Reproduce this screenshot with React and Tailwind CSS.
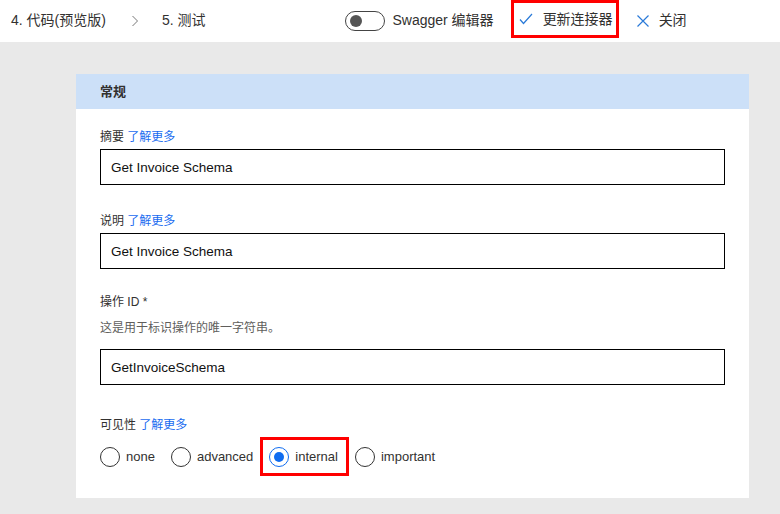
import React from 'react';

const font = { fontFamily: '"Liberation Sans", "Noto Sans CJK SC", sans-serif' };

function Radio({ label, checked }) {
  return (
    <div className="flex items-center">
      <span
        className={
          'flex h-[20px] w-[20px] items-center justify-center rounded-full border ' +
          (checked ? 'border-[#0f6cf0]' : 'border-[#333333]')
        }
      >
        {checked && <span className="h-[10px] w-[10px] rounded-full bg-[#0f6cf0]" />}
      </span>
      <span className="ml-[6px] text-[13px] text-[#323130]">{label}</span>
    </div>
  );
}

function Field({ label, link, value }) {
  return (
    <div>
      <div className="h-[20px] pt-[2px] text-[12px] leading-[18px] text-[#323130]">
        {label} {link && <span className="text-[#1a6cf0]">了解更多</span>}
      </div>
      <div className="mt-[3px] flex h-[36px] items-center border border-black px-[10px] pt-[2px] text-[13.5px] text-[#111]">
        {value}
      </div>
    </div>
  );
}

export default function App() {
  return (
    <div className="flex h-[514px] w-[780px] flex-col bg-[#e9e9e9]" style={font}>
      {/* top bar */}
      <div className="flex h-[42px] shrink-0 items-center bg-white pb-[1px] text-[14px] text-[#323130]">
        <span className="ml-[11px]">4. 代码(预览版)</span>
        <svg className="ml-[25px]" width="8" height="12" viewBox="0 0 8 12">
          <path d="M1.5 1 L6.5 6 L1.5 11" fill="none" stroke="#777" strokeWidth="1" />
        </svg>
        <span className="ml-[23px]">5. 测试</span>

        <span className="ml-[140px] flex h-[20px] w-[40px] items-center rounded-full border border-[#444] px-[4px]">
          <span className="h-[12px] w-[12px] rounded-full bg-[#555]" />
        </span>
        <span className="ml-[7px]">Swagger 编辑器</span>

        <div className="ml-[17px] flex h-[38px] w-[108px] items-center self-start border-[3px] border-[#ff0000] pl-[5px]">
          <svg width="14" height="12" viewBox="0 0 14 12">
            <path d="M1 6.5 L4.5 10.5 L13 1" fill="none" stroke="#2a7ad8" strokeWidth="1.2" />
          </svg>
          <span className="ml-[10px]">更新连接器</span>
        </div>

        <svg className="ml-[18px]" width="12" height="12" viewBox="0 0 12 12">
          <path d="M0.5 0.5 L11.5 11.5 M11.5 0.5 L0.5 11.5" fill="none" stroke="#2a7ad8" strokeWidth="1.2" />
        </svg>
        <span className="ml-[10px]">关闭</span>
      </div>

      {/* card */}
      <div className="ml-[76px] mt-[32px] w-[673px] bg-white">
        <div className="flex h-[35px] items-center bg-[#cce0f8] pl-[24px] text-[13px] font-bold text-[#323130]">
          常规
        </div>
        <div className="px-[24px] pb-[22px] pt-[17px]">
          <Field label="摘要" link value="Get Invoice Schema" />
          <div className="mt-[25px]">
            <Field label="说明" link value="Get Invoice Schema" />
          </div>

          <div className="mt-[24px] h-[18px] text-[12px] leading-[18px] text-[#323130]">操作 ID *</div>
          <div className="mt-[8px] h-[18px] text-[12px] leading-[18px] text-[#605e5c]">
            这是用于标识操作的唯一字符串。
          </div>
          <div className="mt-[12px] flex h-[36px] items-center border border-black px-[10px] pt-[2px] text-[13.5px] text-[#111]">
            GetInvoiceSchema
          </div>

          <div className="mt-[31px] h-[18px] text-[12px] leading-[18px] text-[#323130]">
            可见性 <span className="text-[#1a6cf0]">了解更多</span>
          </div>
          <div className="mt-[3px] flex items-center">
            <Radio label="none" />
            <div className="ml-[16px]">
              <Radio label="advanced" />
            </div>
            <div className="ml-[7px] flex h-[39px] items-center border-[3px] border-[#ff0000] pl-[6px] pr-[8px]">
              <Radio label="internal" checked />
            </div>
            <div className="ml-[6px]">
              <Radio label="important" />
            </div>
          </div>
        </div>
      </div>
    </div>
  );
}
